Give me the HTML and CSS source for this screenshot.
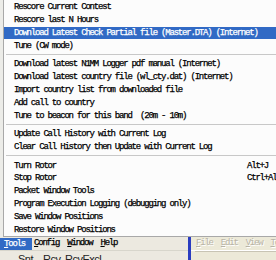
FILE: index.html
```html
<!DOCTYPE html>
<html lang="en">
<head>
    <meta charset="UTF-8">
    <title>Tools Menu</title>
    <link rel="stylesheet" href="styles.css">
</head>
<body>
    <div class="screen">
        <!-- Tools popup menu -->
        <ul class="menu">
            <li class="item">Rescore Current Contest</li>
            <li class="item">Rescore last N Hours</li>
            <li class="item selected">Download Latest Check Partial file (Master.DTA) (Internet)</li>
            <li class="item">Tune (CW mode)</li>
            <li class="sep"></li>
            <li class="item">Download latest N1MM Logger pdf manual (Internet)</li>
            <li class="item">Download latest country file (wl_cty.dat) (Internet)</li>
            <li class="item">Import country list from downloaded file</li>
            <li class="item">Add call to country</li>
            <li class="item">Tune to beacon for this band &nbsp;(20m - 10m)</li>
            <li class="sep"></li>
            <li class="item">Update Call History with Current Log</li>
            <li class="item">Clear Call History then Update with Current Log</li>
            <li class="sep"></li>
            <li class="item"><span class="label">Turn Rotor</span><span class="key">Alt+J</span></li>
            <li class="item"><span class="label">Stop Rotor</span><span class="key">Ctrl+Alt+J</span></li>
            <li class="item">Packet Window Tools</li>
            <li class="item">Program Execution Logging (debugging only)</li>
            <li class="item">Save Window Positions</li>
            <li class="item">Restore Window Positions</li>
        </ul>

        <!-- main window menubar and the window next to it -->
        <div class="bottom">
            <div class="app">
                <div class="menubar">
                    <span class="top active"><u>T</u>ools</span>
                    <span class="top"><u>C</u>onfig</span>
                    <span class="top"><u>W</u>indow</span>
                    <span class="top"><u>H</u>elp</span>
                </div>
                <div class="cols">
                    <span class="col-snt">Snt</span>
                    <span class="col-rcv">Rcv</span>
                    <span>RcvExcl</span>
                </div>
            </div>
            <div class="divider"></div>
            <div class="other">
                <div class="menubar dim">
                    <span class="top"><u>F</u>ile</span>
                    <span class="top"><u>E</u>dit</span>
                    <span class="top"><u>V</u>iew</span>
                    <span class="top"><u>T</u>ools</span>
                </div>
                <div class="pane"></div>
            </div>
        </div>
    </div>
</body>
</html>
```

FILE: styles.css
```css
body {
    margin: 0;
    padding: 0;
    overflow: hidden;
    background: #ecece8;
}

.screen {
    width: 276px;
    height: 260px;
    overflow: hidden;
    display: flex;
    flex-direction: column;
    font-family: 'Liberation Mono', monospace;
    font-size: 9px;
    letter-spacing: -1.2px;
    -webkit-text-stroke: 0.25px currentColor;
    color: #000;
}

/* Popup menu */
.menu {
    list-style: none;
    margin: 0 0 0 3px;
    padding: 1px 0 0 0;
    width: 300px;
    flex: none;
    background: #fcfcfc;
    border-left: 1px solid #a8a8a8;
    border-bottom: 1px solid #a8a8a8;
}

.item {
    height: 12.8px;
    display: flex;
    align-items: center;
    padding-left: 10px;
    white-space: nowrap;
}

.item.selected {
    background: #316ac5;
    color: #fff;
}

.label {
    width: 233px;
    flex: none;
}

.sep {
    height: 5.8px;
    box-sizing: border-box;
    padding-top: 2px;
}

.sep::before {
    content: "";
    display: block;
    border-top: 1px solid #c8c8c8;
    margin-left: 2px;
}

/* Bottom windows */
.bottom {
    flex: 1;
    display: flex;
}

.app {
    width: 188px;
    flex: none;
    display: flex;
    flex-direction: column;
    background: #ece9e0;
}

.menubar {
    height: 13px;
    display: flex;
    align-items: stretch;
    border-bottom: 1px solid #d8d6cc;
}

.top {
    display: flex;
    align-items: center;
    padding: 0 4px;
}

.top.active {
    background: #316ac5;
    color: #fff;
    margin-top: 1px;
    padding-right: 7px;
    margin-right: -2px;
}

.cols {
    display: flex;
    padding: 1px 0 0 18px;
    font-family: 'Liberation Sans', sans-serif;
    font-size: 11px;
    letter-spacing: -0.5px;
    -webkit-text-stroke: 0;
    line-height: 14px;
    color: #222;
}

.col-snt {
    width: 25px;
}

.col-rcv {
    width: 22px;
}

.divider {
    width: 3px;
    flex: none;
    background: #2a3cc0;
}

.other {
    flex: 1;
    background: #ece9d8;
    display: flex;
    flex-direction: column;
}

.menubar.dim {
    padding-left: 1px;
    color: #b8b4a6;
    -webkit-text-stroke: 0;
    text-shadow: 1px 1px 0 #fff;
    border-bottom: 1px solid #fff;
}

.pane {
    flex: 1;
    margin-left: 4px;
    border-top: 1px solid #c8c4b4;
}
```
